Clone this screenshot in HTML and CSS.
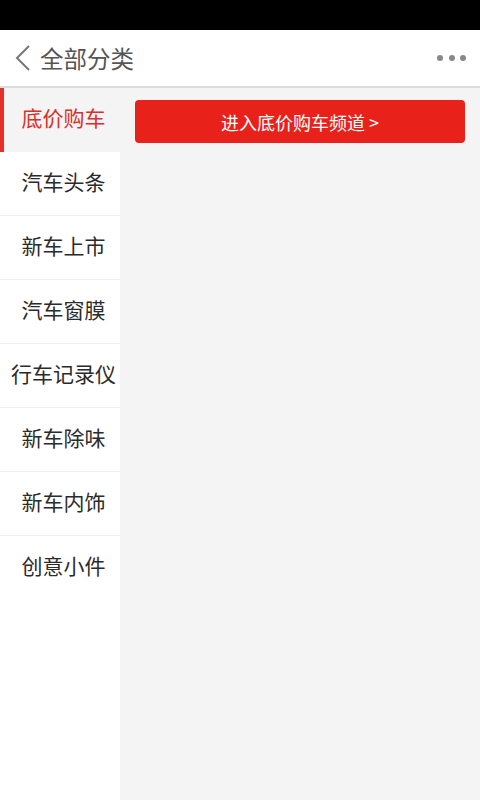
FILE: index.html
```html
<!DOCTYPE html>
<html>
<head>
    <meta name="viewport" content="width=device-width, initial-scale=1.0">
    <title>全部分类</title>
    <link rel="stylesheet" href="styles.css">
</head>
<body>
    <div class="status-bar"></div>
    <div class="header">
        <svg class="back" width="18" height="28" viewBox="0 0 18 28">
            <path d="M15 2 L3 14 L15 26" fill="none" stroke="#777" stroke-width="2"/>
        </svg>
        <h1>全部分类</h1>
        <div class="more"><span></span><span></span><span></span></div>
    </div>
    <div class="main">
        <ul class="sidebar">
            <li class="active">底价购车</li>
            <li>汽车头条</li>
            <li>新车上市</li>
            <li>汽车窗膜</li>
            <li>行车记录仪</li>
            <li>新车除味</li>
            <li>新车内饰</li>
            <li>创意小件</li>
        </ul>
        <div class="content">
            <button class="btn-channel">进入底价购车频道 &gt;</button>
        </div>
    </div>
</body>
</html>
```

FILE: styles.css
```css
* {
    box-sizing: border-box;
}

body {
    margin: 0;
    font-family: "Noto Sans CJK SC", "Noto Sans", sans-serif;
    background: #f4f4f4;
    height: 800px;
    display: flex;
    flex-direction: column;
}

.status-bar {
    height: 30px;
    background: #000;
}

.header {
    height: 58px;
    background: #fff;
    border-bottom: 2px solid #dcdcdc;
    display: flex;
    align-items: center;
    padding: 0 14px 0 14px;
}

.back {
    margin-right: 8px;
}

.header h1 {
    flex: 1;
    margin: 0;
    font-size: 23.5px;
    font-weight: 400;
    color: #555;
}

.more {
    display: flex;
    gap: 5.5px;
}

.more span {
    width: 6px;
    height: 6px;
    border-radius: 50%;
    background: #888;
}

.main {
    flex: 1;
    display: flex;
}

.sidebar {
    width: 120px;
    margin: 0;
    padding: 0;
    list-style: none;
    background: #fff;
}

.sidebar li {
    height: 64px;
    line-height: 59px;
    padding-left: 7px;
    text-align: center;
    font-size: 21px;
    color: #2b2b2b;
    border-bottom: 1px solid #eee;
    white-space: nowrap;
}

.sidebar li:last-child {
    border-bottom: none;
}

.sidebar li.active {
    background: #f4f4f4;
    color: #d9302b;
    border-left: 4px solid #e3302b;
    padding-left: 3px;
    border-bottom: none;
}

.content {
    flex: 1;
    padding: 12px 15px;
}

.btn-channel {
    width: 100%;
    height: 43px;
    background: #e8211b;
    color: #fff;
    border: none;
    border-radius: 4px;
    font-family: inherit;
    font-size: 18px;
}
```
